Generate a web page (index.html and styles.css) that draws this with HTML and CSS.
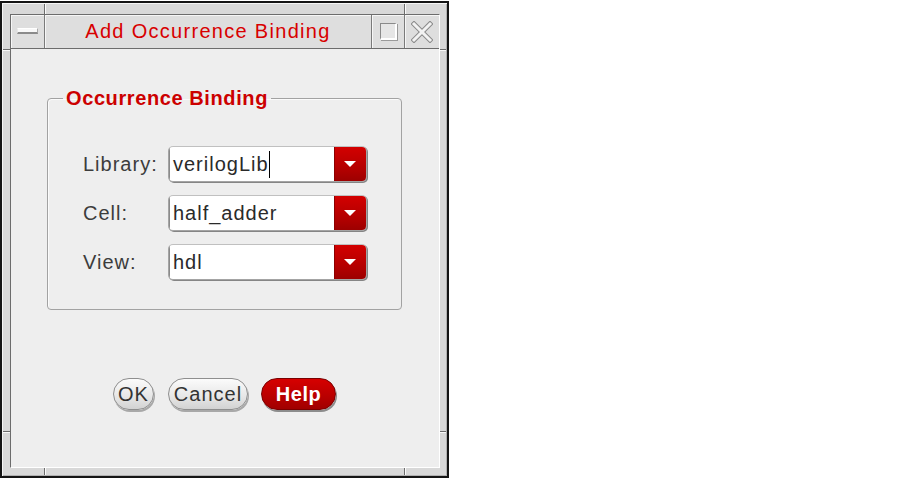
FILE: index.html
```html
<!DOCTYPE html>
<html>
<head>
<meta charset="utf-8">
<link rel="stylesheet" href="styles.css">
</head>
<body>
<div class="window">
  <div class="inner">
    <div class="titlebar">
      <div class="tb-btn tb-min"><span class="min-bar"></span></div>
      <div class="tb-title">Add Occurrence Binding</div>
      <div class="tb-btn tb-max"><span class="max-box"></span></div>
      <div class="tb-btn tb-close">
        <svg width="22" height="22" viewBox="0 0 22 22">
          <path d="M3 3 L19 19 M19 3 L3 19" stroke="#8a8a8a" stroke-width="5" stroke-linecap="square" fill="none"/>
          <path d="M3 3 L19 19 M19 3 L3 19" stroke="#f2f2f2" stroke-width="3" stroke-linecap="square" fill="none"/>
        </svg>
      </div>
    </div>
    <div class="content">
      <fieldset class="group">
        <legend class="group-title">Occurrence Binding</legend>
        <div class="row">
          <span class="label">Library:</span>
          <div class="combo">
            <div class="combo-text">verilogLib<span class="caret"></span></div>
            <div class="combo-btn"><svg width="12" height="6" viewBox="0 0 12 6"><polygon points="0,0 12,0 6,6" fill="#fff"/></svg></div>
          </div>
        </div>
        <div class="row">
          <span class="label">Cell:</span>
          <div class="combo">
            <div class="combo-text">half_adder</div>
            <div class="combo-btn"><svg width="12" height="6" viewBox="0 0 12 6"><polygon points="0,0 12,0 6,6" fill="#fff"/></svg></div>
          </div>
        </div>
        <div class="row">
          <span class="label">View:</span>
          <div class="combo">
            <div class="combo-text">hdl</div>
            <div class="combo-btn"><svg width="12" height="6" viewBox="0 0 12 6"><polygon points="0,0 12,0 6,6" fill="#fff"/></svg></div>
          </div>
        </div>
      </fieldset>
      <div class="buttons">
        <div class="btn btn-ok">OK</div>
        <div class="btn btn-cancel">Cancel</div>
        <div class="btn btn-help">Help</div>
      </div>
    </div>
  </div>
</div>
</body>
</html>
```
FILE: styles.css
```css
html, body {
  margin: 0;
  padding: 0;
  background: #ffffff;
  font-family: "Liberation Sans", Arial, sans-serif;
}

.window {
  box-sizing: border-box;
  width: 449px;
  height: 477px;
  margin-top: 1px;
  border: 2px solid #141414;
  padding: 11px 7px 8px 8px;
  background-color: #d8d8d8;
  background-image:
    linear-gradient(to right, #6c6c6c 1px, #fafafa 1px),
    linear-gradient(to right, #6c6c6c 1px, #fafafa 1px),
    linear-gradient(to right, #6c6c6c 1px, #fafafa 1px),
    linear-gradient(to right, #6c6c6c 1px, #fafafa 1px),
    linear-gradient(to bottom, #6c6c6c 1px, #fafafa 1px),
    linear-gradient(to bottom, #6c6c6c 1px, #fafafa 1px),
    linear-gradient(to bottom, #6c6c6c 1px, #fafafa 1px),
    linear-gradient(to bottom, #6c6c6c 1px, #fafafa 1px);
  background-repeat: no-repeat;
  background-size:
    2px 11px, 2px 11px, 2px 8px, 2px 8px,
    8px 2px, 8px 2px, 7px 2px, 7px 2px;
  background-position:
    42px 0, 402px 0, 42px 100%, 402px 100%,
    0 46px, 0 428px, 100% 46px, 100% 428px;
  box-shadow: inset 1px 1px 0 #f4f4f4, inset -1px -1px 0 #b0b0b0;
}

.inner {
  box-sizing: border-box;
  height: 100%;
  border-top: 1px solid #6c6c6c;
  border-left: 1px solid #6c6c6c;
  border-right: 1px solid #ffffff;
  border-bottom: 1px solid #ffffff;
  display: flex;
  flex-direction: column;
  background: #eeeeee;
}

.titlebar {
  display: flex;
  height: 34px;
  box-sizing: border-box;
  border-bottom: 1px solid #6c6c6c;
  background: #dedede;
}

.tb-btn,
.tb-title {
  box-sizing: border-box;
  border-right: 1px solid #7a7a7a;
  box-shadow: inset 1px 1px 0 #f6f6f6;
  display: flex;
  align-items: center;
  justify-content: center;
}

.tb-min { width: 34px; }
.tb-title {
  width: 327px;
  color: #d80000;
  font-size: 20px;
  letter-spacing: 1.3px;
}
.tb-max { width: 33px; }
.tb-close { flex: 1; border-right: none; }

.min-bar {
  display: block;
  width: 19px;
  height: 3px;
  background: #f8f8f8;
  border: 1px solid #a8a8a8;
  border-top-color: #ffffff;
  border-left-color: #e8e8e8;
  border-bottom: 2px solid #8a8a8a;
  margin-top: -2px;
}

.max-box {
  display: block;
  width: 14px;
  height: 14px;
  background: #e6e6e6;
  border-top: 1px solid #8a8a8a;
  border-left: 1px solid #8a8a8a;
  border-right: 2px solid #ffffff;
  border-bottom: 2px solid #ffffff;
  box-shadow: 1px 1px 0 #9a9a9a;
}

.content {
  flex: 1;
  padding: 37px 0 0 36px;
  background: #eeeeee;
}

.group {
  box-sizing: border-box;
  width: 355px;
  margin: 0;
  padding: 36px 0 29px 35px;
  border: 1px solid #a2a2a2;
  border-radius: 4px;
  box-shadow: inset 1px 1px 0 #fbfbfb;
  display: flex;
  flex-direction: column;
  gap: 13px;
}

.group-title {
  margin-left: -20px;
  padding: 0 3px;
  font-size: 20px;
  line-height: 24px;
  font-weight: bold;
  letter-spacing: 0.6px;
  color: #cc0000;
}

.row {
  display: flex;
  align-items: center;
  height: 36px;
}

.label {
  width: 85px;
  font-size: 20px;
  letter-spacing: 1px;
  color: #3c3c3c;
}

.combo {
  box-sizing: border-box;
  width: 199px;
  height: 36px;
  display: flex;
  border: 1px solid #a4a4a4;
  border-top-color: #c0c0c0;
  border-radius: 5px;
  overflow: hidden;
  box-shadow: 1px 1px 0 #858585;
  background: #ffffff;
}

.combo-text {
  flex: 1;
  display: flex;
  align-items: center;
  padding-left: 4px;
  font-size: 20px;
  letter-spacing: 1px;
  color: #2a2a2a;
  box-shadow: inset 1px 0 0 #8a8a8a;
}

.caret {
  display: inline-block;
  width: 0;
  height: 27px;
  border-left: 1px solid #000000;
  margin-left: 0;
}

.combo-btn {
  width: 32px;
  display: flex;
  align-items: center;
  justify-content: center;
  background: linear-gradient(to bottom, #d30000, #b00000 70%, #9c0000);
  box-shadow: inset 1px 0 0 #8c0000;
}

.buttons {
  width: 355px;
  margin-top: 68px;
  display: flex;
  justify-content: center;
  gap: 14px;
}

.btn {
  box-sizing: border-box;
  height: 32px;
  border-radius: 16px;
  display: flex;
  align-items: center;
  justify-content: center;
  font-size: 20px;
  letter-spacing: 1px;
}

.btn-ok,
.btn-cancel {
  color: #333333;
  background: linear-gradient(to bottom, #fbfbfb, #e6e6e6 60%, #d2d2d2);
  border: 1px solid #8e8e8e;
  box-shadow: 1px 2px 0 #a8a8a8;
}

.btn-ok { width: 41px; }
.btn-cancel { width: 80px; margin-right: -1px; }

.btn-help {
  width: 75px;
  color: #ffffff;
  font-weight: bold;
  letter-spacing: 0.5px;
  background: linear-gradient(to bottom, #d60000, #b80000 60%, #a00000);
  border: 1px solid #7a0000;
  box-shadow: 1px 2px 0 #8c8c8c;
}
```
